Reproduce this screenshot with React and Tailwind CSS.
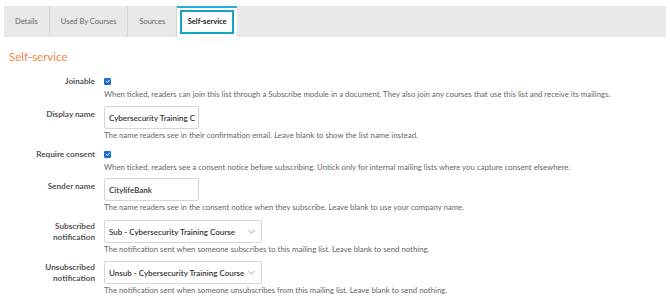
import React from 'react'

const font = { fontFamily: 'Lato, "Open Sans", sans-serif' }

function Checkbox() {
  return (
    <span className="inline-flex h-[7px] w-[7px] items-center justify-center rounded-[1px] bg-[#1a6ed8]">
      <svg viewBox="0 0 10 10" className="h-[6px] w-[6px]">
        <path d="M2 5.2 L4.2 7.3 L8 2.8" fill="none" stroke="white" strokeWidth="1.6" />
      </svg>
    </span>
  )
}

function Chevron() {
  return (
    <svg viewBox="0 0 12 8" className="h-[5px] w-[9px]">
      <path d="M1 1.5 L6 6.5 L11 1.5" fill="none" stroke="#777" strokeWidth="1.1" />
    </svg>
  )
}

function Row({ label, children, desc, labelClass = 'pt-0', descClass = '', className = '' }) {
  return (
    <div className={'grid grid-cols-[95px_1fr] gap-x-[9px] ' + className}>
      <div className={'text-right text-[8.2px] font-bold leading-[11px] text-[#555] ' + labelClass}>{label}</div>
      <div>
        {children}
        <p className={'whitespace-nowrap text-[7.8px] leading-[12px] text-[#666] ' + descClass}>{desc}</p>
      </div>
    </div>
  )
}

function TextInput({ value }) {
  return (
    <div className="flex h-[23px] w-[95px] items-center overflow-hidden whitespace-nowrap rounded-[2px] border border-[#d6d6d6] bg-white px-[4px] text-[8px] font-semibold text-[#333]">
      {value}
    </div>
  )
}

function Select({ value }) {
  return (
    <div className="flex h-[23px] w-[158px] items-center justify-between rounded-[2px] border border-[#d6d6d6] bg-white pl-[4px] pr-[5px] text-[8px] font-semibold text-[#333]">
      <span className="whitespace-nowrap">{value}</span>
      <Chevron />
    </div>
  )
}

export default function App() {
  const tabs = ['Details', 'Used By Courses', 'Sources']
  return (
    <div className="h-[300px] w-[670px] overflow-hidden bg-white" style={font}>
      <div className="px-[4px] pt-[6px]">
        <div className="flex h-[31px] items-stretch bg-[#e9e9e9]">
          {tabs.map((t) => (
            <div
              key={t}
              className="flex items-center whitespace-nowrap border-r border-[#d4d4d4] px-[11px] text-[7.5px] text-[#666]"
            >
              {t}
            </div>
          ))}
          <div className="flex w-[60px] items-stretch border-t-2 border-[#22b0d6] bg-white px-[3px] pb-[3px] pt-[2px]">
            <div className="flex flex-1 items-center justify-center whitespace-nowrap border-2 border-[#13a4c8] text-[7.5px] font-bold text-[#222]">
              Self-service
            </div>
          </div>
        </div>
      </div>

      <h2 className="mt-[12px] pl-[9px] text-[11.5px] leading-[16px] text-[#f0874a]">Self-service</h2>

      <div className="mt-[10px]">
        <Row
          label="Joinable"
          labelClass="pt-[1px]"
          descClass="pt-[1px]"
          desc="When ticked, readers can join this list through a Subscribe module in a document. They also join any courses that use this list and receive its mailings."
        >
          <div className="flex h-[12px] items-center">
            <Checkbox />
          </div>
        </Row>

        <Row
          className="mt-[6px]"
          label="Display name"
          labelClass="pt-[3px]"
          desc="The name readers see in their confirmation email. Leave blank to show the list name instead."
        >
          <TextInput value="Cybersecurity Training C" />
        </Row>

        <Row
          className="mt-[7px]"
          label="Require consent"
          labelClass="pt-[1px]"
          descClass="pt-[1px]"
          desc="When ticked, readers see a consent notice before subscribing. Untick only for internal mailing lists where you capture consent elsewhere."
        >
          <div className="flex h-[12px] items-center">
            <Checkbox />
          </div>
        </Row>

        <Row
          className="mt-[5px]"
          label="Sender name"
          labelClass="pt-[3px]"
          desc="The name readers see in the consent notice when they subscribe. Leave blank to use your company name."
        >
          <TextInput value="CitylifeBank" />
        </Row>

        <Row
          className="mt-[7px]"
          label={<>Subscribed<br />notification</>}
          labelClass="pt-[1px]"
          desc="The notification sent when someone subscribes to this mailing list. Leave blank to send nothing."
        >
          <Select value="Sub - Cybersecurity Training Course" />
        </Row>

        <Row
          className="mt-[6px]"
          label={<>Unsubscribed<br />notification</>}
          labelClass="pt-[1px]"
          desc="The notification sent when someone unsubscribes from this mailing list. Leave blank to send nothing."
        >
          <Select value="Unsub - Cybersecurity Training Course" />
        </Row>
      </div>
    </div>
  )
}
